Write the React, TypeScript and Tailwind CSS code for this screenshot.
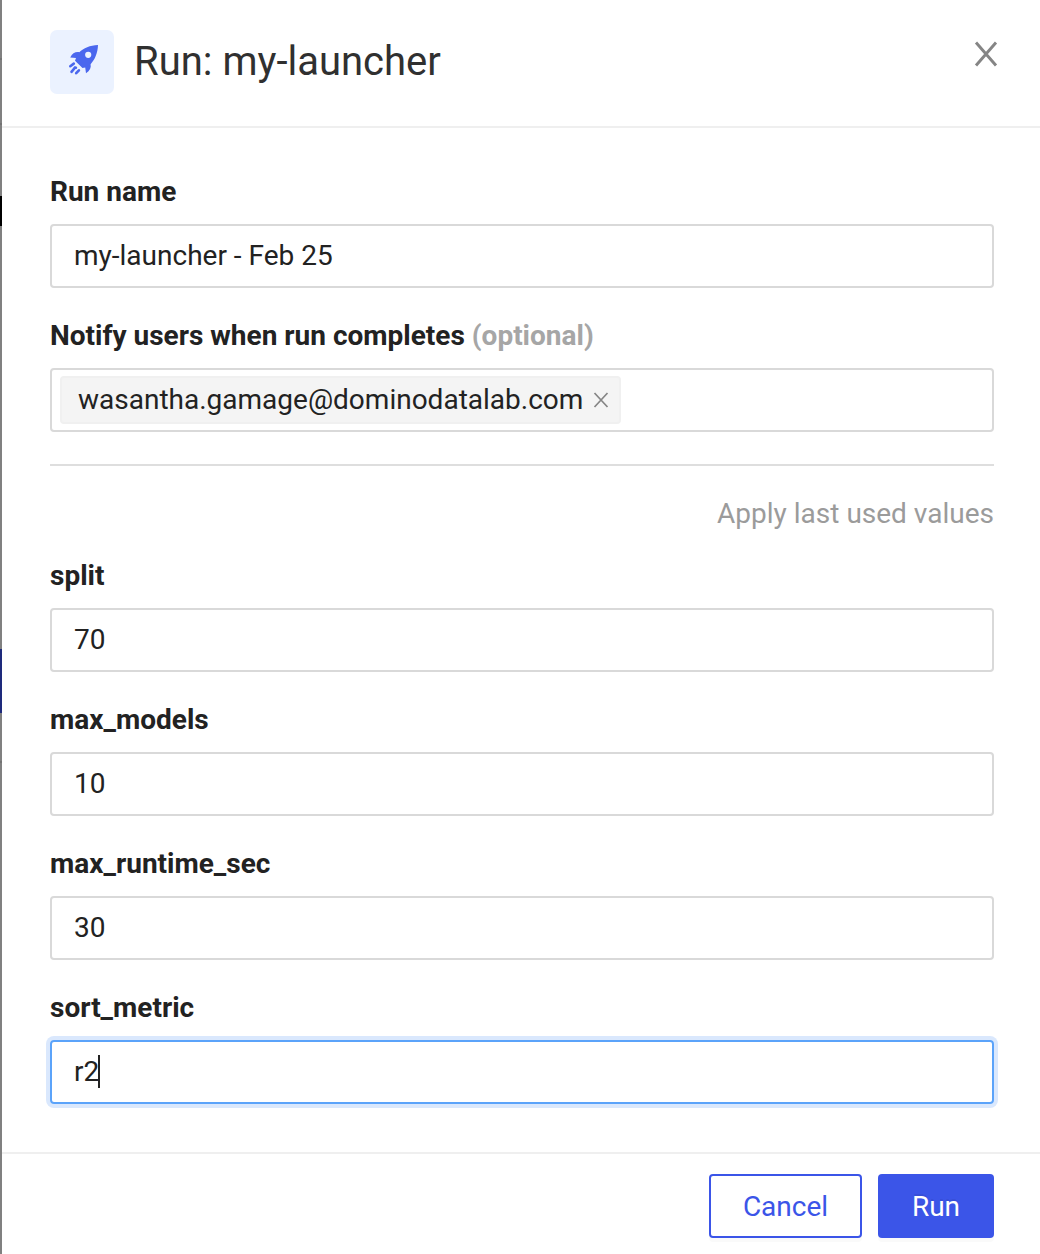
import React from 'react';

function Field({ label, value, focused = false }: { label: string; value: string; focused?: boolean }) {
  return (
    <div className="h-36">
      <div className="h-[50px] pt-px text-[28px] leading-[38px] font-bold">{label}</div>
      <div className={focused ? 'mt-[2px] flex h-16 items-center rounded-[4px] border-2 border-[#5ba3fa] px-[22px] text-[28px] shadow-[0_0_0_4px_#dae8fd]' : 'mt-[2px] flex h-16 items-center rounded-[4px] border-2 border-[#d9d9d9] px-[22px] text-[28px]'}>
        <span>{value}</span>
        {focused && <span className="-ml-px mb-px h-[33px] w-[2px] bg-[#222]" />}
      </div>
    </div>
  );
}

export default function App() {
  return (
    <div className="flex h-[1254px] w-[1040px] overflow-hidden bg-white text-[#222] font-['Roboto',sans-serif]">
      <div className="flex w-[2px] flex-col bg-[#808080]">
        <div className="mt-[58px] h-[2px] bg-[#737373]" />
        <div className="mt-[63px] h-[2px] bg-[#737373]" />
        <div className="mt-[71px] h-[30px] bg-black" />
        <div className="mt-[423px] h-16 bg-[#1e2a7c]" />
        <div className="mt-[48px] h-[2px] bg-[#737373]" />
      </div>
      <div className="flex flex-1 flex-col">
        <header className="flex h-32 items-start border-b-2 border-[#efefef] pl-12 pr-10 pt-[30px]">
          <div className="flex size-16 items-center justify-center rounded-[7px] bg-[#ebf2ff]">
            <svg width="64" height="64" viewBox="0 0 64 64" fill="#4a67ee">
              <path fillRule="evenodd" d="M48 15C40 15.3 33.5 18.2 29.300 22.200C25.500 21.600 22.300 23.200 20.200 27.500L26 28L25 30.800L32.500 38L35.200 37.400L36 43.300C40 40.500 41.300 37.500 40.600 34.200C45 29.500 47.700 23 48 15ZM38.200 21.700a3.100 3.100 0 1 1 0 6.200 3.100 3.100 0 0 1 0-6.200Z" />
              <path d="M23.800 33.600 20.300 36.200M25 37.700 21.500 41.800M28.900 40.300 26.200 43.200" fill="none" stroke="#4a67ee" strokeWidth="2.600" strokeLinecap="round" />
              <path d="M25 37.700h1" fill="none" stroke="#4a67ee" strokeWidth="2.400" strokeLinecap="round" />
            </svg>
          </div>
          <h1 className="ml-5 flex-1 text-[40px] leading-[64px] text-[#303030]">Run: my-launcher</h1>
          <svg className="mt-[10px]" width="28" height="28" viewBox="0 0 28 28" fill="none" stroke="#858585" strokeWidth="2.900"><path d="M4 2.500 24 25.500M24 2.500 4 25.500" /></svg>
        </header>
        <main className="h-[1024px] pl-12 pr-[46px] pt-11">
          <Field label="Run name" value="my-launcher - Feb 25" />
          <div className="h-[148px]">
            <div className="h-[50px] pt-px text-[28px] leading-[38px] font-bold">Notify users when run completes <span className="text-[#a6a6a6]">(optional)</span></div>
            <div className="mt-[2px] flex h-16 items-center rounded-[4px] border-2 border-[#d9d9d9] px-2">
              <div className="flex h-12 items-center rounded-[4px] border-2 border-[#f0f0f0] bg-[#f4f4f4] pl-4 pr-[10px] text-[28px]">wasantha.gamage@dominodatalab.com
                <svg className="ml-[10px]" width="16" height="16" viewBox="0 0 16 16" fill="none" stroke="#858585" strokeWidth="1.700"><path d="M1.500 1 14.500 15M14.500 1 1.500 15" /></svg>
              </div>
            </div>
          </div>
          <div className="h-[2px] bg-[#dedede]" />
          <div className="h-[90px] pt-[29px] text-right text-[28px] leading-[38px] text-[#9b9b9b]">Apply last used values</div>
          <Field label="split" value="70" />
          <Field label="max_models" value="10" />
          <Field label="max_runtime_sec" value="30" />
          <Field label="sort_metric" value="r2" focused />
        </main>
        <footer className="flex flex-1 justify-end gap-4 border-t-2 border-[#efefef] pr-[46px] pt-5 text-[28px]">
          <button className="h-16 w-[153px] rounded-[4px] border-2 border-[#3b55e8] pt-[2px] text-[#3b55e8] shadow-[0_4px_0_#fafafa]">Cancel</button>
          <button className="h-16 w-[116px] rounded-[4px] bg-[#3b55e8] pt-[2px] text-white shadow-[0_4px_0_#fafafa] [text-shadow:0_-2px_0_rgba(0,0,0,0.08)]">Run</button>
        </footer>
      </div>
    </div>
  );
}
